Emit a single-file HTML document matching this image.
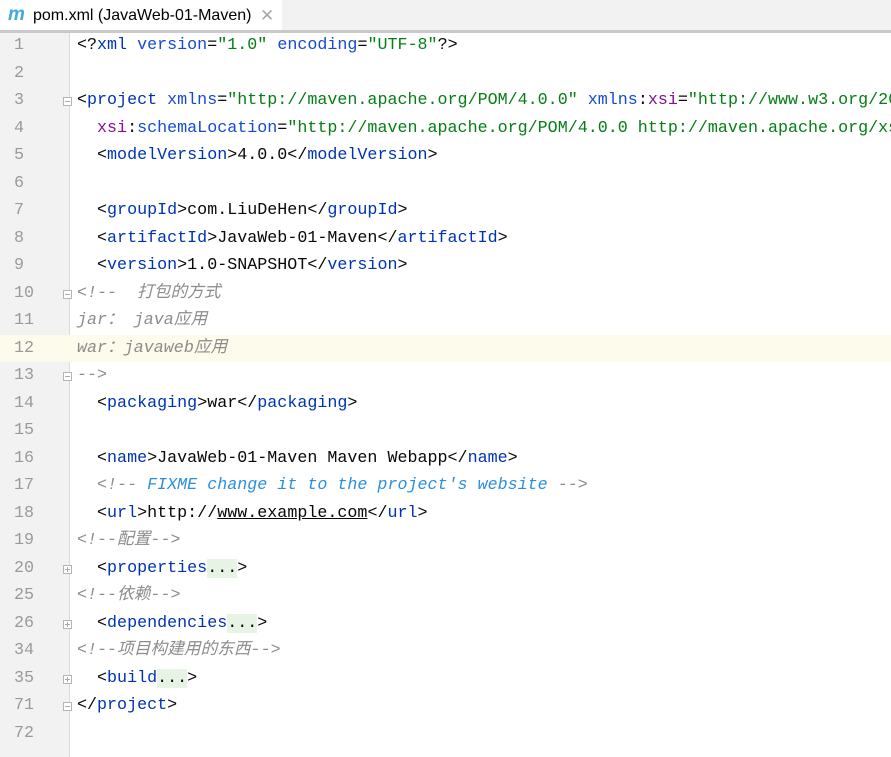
<!DOCTYPE html>
<html><head><meta charset="utf-8"><style>
body{margin:0;width:891px;height:757px;overflow:hidden;background:#fff;font-family:"Liberation Mono","Noto Sans CJK SC",monospace;position:relative}
.tabbar{position:absolute;left:0;top:0;width:891px;height:30px;background:#f2f2f2;border-bottom:3px solid #c9c9c9}
.tab{position:absolute;left:0;top:0;width:282px;height:30px;background:#fff;font-family:"Liberation Sans","Noto Sans CJK SC",sans-serif;font-size:16px;color:#000;line-height:31px}
.tab .m{position:absolute;left:8px;top:0;color:#3fa9e0;font-weight:bold;font-style:italic;font-size:19px;line-height:29px}
.tab .t{position:absolute;left:33px}
.tab .x{position:absolute;left:260px;color:#a8a8a8;font-size:17px}
.gutter{position:absolute;left:0;top:33px;width:69px;height:724px;background:#f2f2f2;border-right:1px solid #dcdcdc}
.hl{position:absolute;left:0;width:891px;height:27.5px;background:#fdfbeb}
.row{position:absolute;left:0;right:0;overflow:hidden;height:27.5px;line-height:27.5px;font-size:16.7px;white-space:pre;color:#080808}
.ln{position:absolute;left:14px;color:#9a9a9a;}
.code{position:absolute;left:77px}
.tg{color:#0033b3}.at{color:#174ad4}.ns{color:#871094}.st{color:#067d17}
.cm{color:#8c8c8c;font-style:italic}.fx{color:#2a8fdf;font-style:italic}
.f{background:#e7f3e4}
.fold{position:absolute;left:63px;width:9px;height:9px;border:1px solid #b5b5b5;background:#fff;box-sizing:border-box}
.fold:after{content:"";position:absolute;left:1px;top:3px;width:5px;height:1px;background:#aaa}
.plus:before{content:"";position:absolute;left:3px;top:1px;width:1px;height:5px;background:#aaa}
</style></head><body>
<div class="tabbar"><div class="tab"><span class="m">m</span><span class="t">pom.xml (JavaWeb-01-Maven)</span><span class="x">✕</span></div></div>
<div class="gutter"></div>
<div class="hl" style="top:334.5px"></div>

<div class="row" style="top:32px"><span class="ln">1</span><span class="code">&lt;?<span class="tg">xml</span> <span class="at">version</span>=<span class="st">"1.0"</span> <span class="at">encoding</span>=<span class="st">"UTF-8"</span>?&gt;</span></div>
<div class="row" style="top:59.5px"><span class="ln">2</span></div>
<div class="row" style="top:87px"><span class="ln">3</span><span class="code">&lt;<span class="tg">project</span> <span class="at">xmlns</span>=<span class="st">"http://maven.apache.org/POM/4.0.0"</span> <span class="at">xmlns</span>:<span class="ns">xsi</span>=<span class="st">"http://www.w3.org/20</span></span></div>
<div class="row" style="top:114.5px"><span class="ln">4</span><span class="code">  <span class="ns">xsi</span>:<span class="at">schemaLocation</span>=<span class="st">"http://maven.apache.org/POM/4.0.0 http://maven.apache.org/xs</span></span></div>
<div class="row" style="top:142px"><span class="ln">5</span><span class="code">  &lt;<span class="tg">modelVersion</span>&gt;4.0.0&lt;/<span class="tg">modelVersion</span>&gt;</span></div>
<div class="row" style="top:169.5px"><span class="ln">6</span></div>
<div class="row" style="top:197px"><span class="ln">7</span><span class="code">  &lt;<span class="tg">groupId</span>&gt;com.LiuDeHen&lt;/<span class="tg">groupId</span>&gt;</span></div>
<div class="row" style="top:224.5px"><span class="ln">8</span><span class="code">  &lt;<span class="tg">artifactId</span>&gt;JavaWeb-01-Maven&lt;/<span class="tg">artifactId</span>&gt;</span></div>
<div class="row" style="top:252px"><span class="ln">9</span><span class="code">  &lt;<span class="tg">version</span>&gt;1.0-SNAPSHOT&lt;/<span class="tg">version</span>&gt;</span></div>
<div class="row" style="top:279.5px"><span class="ln">10</span><span class="code cm">&lt;!--  打包的方式</span></div>
<div class="row" style="top:307px"><span class="ln">11</span><span class="code cm">jar： java应用</span></div>
<div class="row" style="top:334.5px"><span class="ln">12</span><span class="code cm">war：javaweb应用</span></div>
<div class="row" style="top:362px"><span class="ln">13</span><span class="code cm">--&gt;</span></div>
<div class="row" style="top:389.5px"><span class="ln">14</span><span class="code">  &lt;<span class="tg">packaging</span>&gt;war&lt;/<span class="tg">packaging</span>&gt;</span></div>
<div class="row" style="top:417px"><span class="ln">15</span></div>
<div class="row" style="top:444.5px"><span class="ln">16</span><span class="code">  &lt;<span class="tg">name</span>&gt;JavaWeb-01-Maven Maven Webapp&lt;/<span class="tg">name</span>&gt;</span></div>
<div class="row" style="top:472px"><span class="ln">17</span><span class="code">  <span class="cm">&lt;!-- </span><span class="fx">FIXME change it to the project's website</span><span class="cm"> --&gt;</span></span></div>
<div class="row" style="top:499.5px"><span class="ln">18</span><span class="code">  &lt;<span class="tg">url</span>&gt;http://<span style="text-decoration:underline">www.example.com</span>&lt;/<span class="tg">url</span>&gt;</span></div>
<div class="row" style="top:527px"><span class="ln">19</span><span class="code cm">&lt;!--配置--&gt;</span></div>
<div class="row" style="top:554.5px"><span class="ln">20</span><span class="code">  &lt;<span class="tg">properties</span><span class="f">...</span>&gt;</span></div>
<div class="row" style="top:582px"><span class="ln">25</span><span class="code cm">&lt;!--依赖--&gt;</span></div>
<div class="row" style="top:609.5px"><span class="ln">26</span><span class="code">  &lt;<span class="tg">dependencies</span><span class="f">...</span>&gt;</span></div>
<div class="row" style="top:637px"><span class="ln">34</span><span class="code cm">&lt;!--项目构建用的东西--&gt;</span></div>
<div class="row" style="top:664.5px"><span class="ln">35</span><span class="code">  &lt;<span class="tg">build</span><span class="f">...</span>&gt;</span></div>
<div class="row" style="top:692px"><span class="ln">71</span><span class="code">&lt;/<span class="tg">project</span>&gt;</span></div>
<div class="row" style="top:719.5px"><span class="ln">72</span></div>

<div class="fold" style="top:97px"></div>
<div class="fold" style="top:290px"></div>
<div class="fold" style="top:372px"></div>
<div class="fold plus" style="top:565px"></div>
<div class="fold plus" style="top:620px"></div>
<div class="fold plus" style="top:675px"></div>
<div class="fold" style="top:702px"></div>
</body></html>
